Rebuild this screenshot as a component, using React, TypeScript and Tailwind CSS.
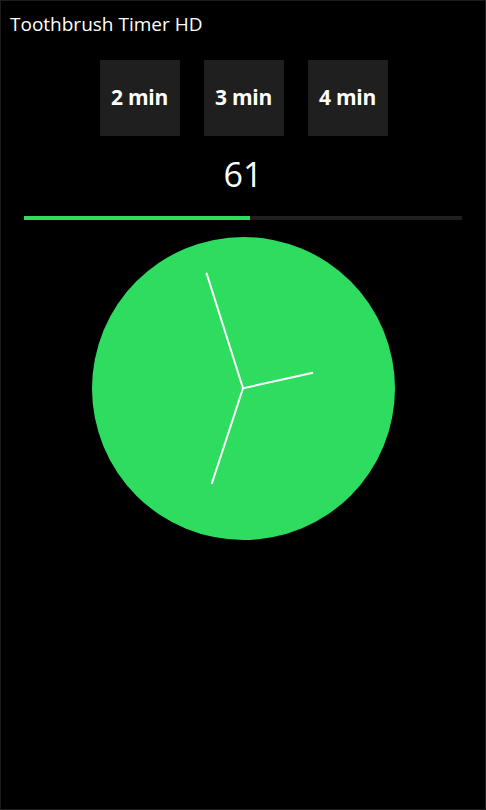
import React from "react";

const durations = ["2 min", "3 min", "4 min"];

export default function App() {
  const progress = 51.6;
  return (
    <div className="flex h-[810px] w-[486px] flex-col items-center border border-[#1c1c1c] bg-black text-white [font-family:'Open_Sans',sans-serif]">
      <h1 className="self-start pl-[9px] pt-[9px] text-[19px] leading-[28px] font-normal">
        Toothbrush Timer HD
      </h1>

      <div className="mt-[22px] flex gap-6 pl-[1px]">
        {durations.map((d) => (
          <button
            key={d}
            type="button"
            className="flex h-[76px] w-[80px] items-center justify-center bg-[#1f1f1f] text-[21px] font-bold text-white tracking-[-0.3px]"
          >
            {d}
          </button>
        ))}
      </div>

      <p className="mt-[16px] text-[34px] leading-[44px] font-normal">61</p>

      <div className="mt-[20px] h-[4px] w-[438px] bg-[#1f1f1f]">
        <div className="h-full bg-[#2edd5f]" style={{ width: `${progress}%` }} />
      </div>

      <div className="relative mt-[17px] h-[303px] w-[303px] rounded-full bg-[#2edd5f]">
        <svg className="absolute inset-0" width="303" height="303" viewBox="0 0 303 303">
          <g stroke="#ffffff" strokeWidth="2" strokeLinecap="butt">
            <line x1="151" y1="151.3" x2="114.4" y2="35.7" />
            <line x1="151" y1="151.3" x2="221" y2="135.7" />
            <line x1="151" y1="151.3" x2="119.7" y2="247" />
          </g>
        </svg>
      </div>
    </div>
  );
}
